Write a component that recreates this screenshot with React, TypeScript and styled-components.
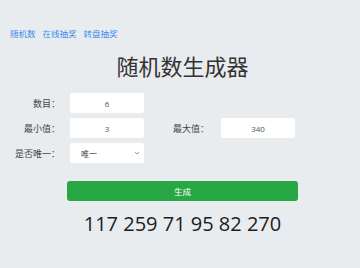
import React from "react";
import styled, { createGlobalStyle } from "styled-components";

const Global = createGlobalStyle`
  html, body { margin: 0; padding: 0; background: #e9ecef; }
  body { font-family: "Noto Sans CJK SC", "Noto Sans", sans-serif; }
  * { box-sizing: border-box; }
`;

const Page = styled.div`
  width: 360px;
  height: 268px;
  padding-top: 28px;
  background: #e9ecef;
`;

const Nav = styled.nav`
  display: flex;
  gap: 7px;
  padding-left: 10px;
  height: 10px;
  line-height: 10px;
  font-size: 8.5px;
`;

const NavLink = styled.a`
  color: #3b8cf0;
  text-decoration: none;
`;

const Title = styled.h1`
  margin: 12px 0 0 0;
  padding-left: 67px;
  width: 298px;
  text-align: center;
  font-size: 22px;
  line-height: 30px;
  font-weight: 400;
  color: #333;
`;

const Form = styled.div`
  margin-top: 13px;
  display: flex;
  flex-direction: column;
  gap: 5px;
`;

const Row = styled.div`
  display: flex;
  align-items: center;
  height: 20px;
`;

const Label = styled.label<{ $w: number; $gap: number }>`
  width: ${(p) => p.$w}px;
  text-align: right;
  font-size: 9px;
  color: #444;
  margin-right: ${(p) => p.$gap}px;
`;

const Input = styled.div`
  width: 74px;
  height: 20px;
  background: #fff;
  border-radius: 2px;
  display: flex;
  align-items: center;
  justify-content: center;
  font-family: "Open Sans", sans-serif;
  font-size: 8px;
  color: #555;
`;

const Select = styled.div`
  width: 74px;
  height: 20px;
  background: #fff;
  border-radius: 2px;
  display: flex;
  align-items: center;
  justify-content: space-between;
  padding: 0 4px 0 11px;
  font-size: 8px;
  color: #444;
`;

const Button = styled.button`
  display: block;
  margin: 18px 0 0 67px;
  width: 231px;
  height: 20px;
  border: none;
  border-radius: 3px;
  background: #28a745;
  color: #fff;
  font-family: "Noto Sans CJK SC", sans-serif;
  font-size: 8.5px;
  padding: 0;
`;

const Result = styled.div`
  margin: 8px 0 0 67px;
  width: 231px;
  text-align: center;
  font-family: "Open Sans", sans-serif;
  font-size: 20px;
  line-height: 30px;
  font-weight: 500;
  color: #1a1d21;
`;

export default function App() {
  return (
    <>
      <Global />
      <Page>
        <Nav>
          <NavLink href="#">随机数</NavLink>
          <NavLink href="#">在线抽奖</NavLink>
          <NavLink href="#">转盘抽奖</NavLink>
        </Nav>
        <Title>随机数生成器</Title>
        <Form>
          <Row>
            <Label $w={60} $gap={10}>数目：</Label>
            <Input>6</Input>
          </Row>
          <Row>
            <Label $w={60} $gap={10}>最小值：</Label>
            <Input>3</Input>
            <Label $w={65} $gap={12}>最大值：</Label>
            <Input>340</Input>
          </Row>
          <Row>
            <Label $w={60} $gap={10}>是否唯一：</Label>
            <Select>
              <span>唯一</span>
              <svg width="6" height="4" viewBox="0 0 6 4">
                <path d="M0.8 1 L3 3 L5.2 1" fill="none" stroke="#666" strokeWidth="0.7" />
              </svg>
            </Select>
          </Row>
        </Form>
        <Button>生成</Button>
        <Result>117 259 71 95 82 270</Result>
      </Page>
    </>
  );
}
